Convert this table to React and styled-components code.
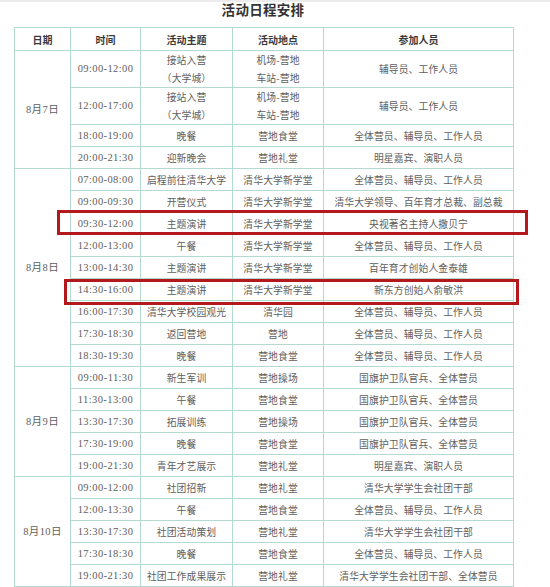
import React from "react";
import styled, { createGlobalStyle } from "styled-components";

const GlobalStyle = createGlobalStyle`
  body {
    margin: 0;
    background: #ffffff;
    font-family: "Noto Sans CJK SC", "Liberation Sans", sans-serif;
  }
`;

const Page = styled.div`
  position: relative;
  width: 550px;
  height: 587px;
  overflow: hidden;
  border-top: 2px solid #ececec;
  box-sizing: border-box;
  padding-left: 14px;
`;

const Title = styled.div`
  width: 498px;
  height: 25px;
  line-height: 15px;
  text-align: center;
  font-size: 13.5px;
  font-weight: bold;
  color: #333;
  letter-spacing: 0.3px;
`;

const Table = styled.table`
  width: 499px;
  table-layout: fixed;
  border-collapse: collapse;
  color: #5e5e5e;
  font-size: 10px;
`;

const Row = styled.tr`
  height: ${(p) => (p.$double ? "36.5px" : "22px")};
`;

const HeadCell = styled.th`
  border: 1px solid #b3d9d0;
  padding: 0;
  height: 22px;
  font-size: 10px;
  font-weight: bold;
  color: #3a3a3a;
  text-align: center;
  vertical-align: middle;
`;

const Cell = styled.td`
  border: 1px solid #b3d9d0;
  padding: 0;
  text-align: center;
  vertical-align: middle;
  line-height: 18px;
  white-space: nowrap;
  font-family: ${(p) =>
    p.$mono
      ? '"Liberation Serif", "Noto Sans CJK SC", serif'
      : '"Noto Sans CJK SC", sans-serif'};
  font-size: ${(p) => (p.$mono ? "10.5px" : "9.8px")};
  letter-spacing: ${(p) => (p.$mono ? "0.4px" : "0.1px")};
`;

const Highlight = styled.div`
  position: absolute;
  border: 3px solid #b3191c;
  box-sizing: border-box;
  pointer-events: none;
`;

const ALL = "全体营员、辅导员、工作人员";
const GUARD = "国旗护卫队官兵、全体营员";
const STAR = "明星嘉宾、演职人员";
const CLUB = "清华大学学生会社团干部";

const days = [
  {
    date: "8月7日",
    rows: [
      ["09:00-12:00", ["接站入营", "（大学城）"], ["机场-营地", "车站-营地"], "辅导员、工作人员"],
      ["12:00-17:00", ["接站入营", "（大学城）"], ["机场-营地", "车站-营地"], "辅导员、工作人员"],
      ["18:00-19:00", "晚餐", "营地食堂", ALL],
      ["20:00-21:30", "迎新晚会", "营地礼堂", STAR],
    ],
  },
  {
    date: "8月8日",
    rows: [
      ["07:00-08:00", "启程前往清华大学", "清华大学新学堂", ALL],
      ["09:00-09:30", "开营仪式", "清华大学新学堂", "清华大学领导、百年育才总裁、副总裁"],
      ["09:30-12:00", "主题演讲", "清华大学新学堂", "央视著名主持人撒贝宁"],
      ["12:00-13:00", "午餐", "清华大学新学堂", ALL],
      ["13:00-14:30", "主题演讲", "清华大学新学堂", "百年育才创始人金泰雄"],
      ["14:30-16:00", "主题演讲", "清华大学新学堂", "新东方创始人俞敏洪"],
      ["16:00-17:30", "清华大学校园观光", "清华园", ALL],
      ["17:30-18:30", "返回营地", "营地", ALL],
      ["18:30-19:30", "晚餐", "营地食堂", ALL],
    ],
  },
  {
    date: "8月9日",
    rows: [
      ["09:00-11:30", "新生军训", "营地操场", GUARD],
      ["11:30-13:00", "午餐", "营地食堂", GUARD],
      ["13:30-17:30", "拓展训练", "营地操场", GUARD],
      ["17:30-19:00", "晚餐", "营地食堂", GUARD],
      ["19:00-21:30", "青年才艺展示", "营地礼堂", STAR],
    ],
  },
  {
    date: "8月10日",
    rows: [
      ["09:00-12:00", "社团招新", "营地礼堂", CLUB],
      ["12:00-13:30", "午餐", "营地食堂", ALL],
      ["13:30-17:30", "社团活动策划", "营地礼堂", CLUB],
      ["17:30-18:30", "晚餐", "营地食堂", ALL],
      ["19:00-21:30", "社团工作成果展示", "营地礼堂", CLUB + "、全体营员"],
    ],
  },
];

const lines = (v) =>
  Array.isArray(v) ? v.map((l, i) => <div key={i}>{l}</div>) : v;

const App = () => {
  return (
    <>
      <GlobalStyle />
      <Page>
        <Title>活动日程安排</Title>
        <Table>
          <colgroup>
            <col style={{ width: 56 }} />
            <col style={{ width: 70 }} />
            <col style={{ width: 92 }} />
            <col style={{ width: 91 }} />
            <col style={{ width: 190 }} />
          </colgroup>
          <thead>
            <tr>
              <HeadCell>日期</HeadCell>
              <HeadCell>时间</HeadCell>
              <HeadCell>活动主题</HeadCell>
              <HeadCell>活动地点</HeadCell>
              <HeadCell>参加人员</HeadCell>
            </tr>
          </thead>
          <tbody>
            {days.map((day) =>
              day.rows.map((r, i) => (
                <Row key={day.date + i} $double={Array.isArray(r[1])}>
                  {i === 0 && (
                    <Cell $mono rowSpan={day.rows.length}>
                      {day.date}
                    </Cell>
                  )}
                  <Cell $mono>{r[0]}</Cell>
                  <Cell>{lines(r[1])}</Cell>
                  <Cell>{lines(r[2])}</Cell>
                  <Cell>{r[3]}</Cell>
                </Row>
              ))
            )}
          </tbody>
        </Table>
        <Highlight style={{ left: 57, top: 208, width: 471, height: 25 }} />
        <Highlight style={{ left: 64, top: 277, width: 455, height: 26 }} />
      </Page>
    </>
  );
};

export default App;
